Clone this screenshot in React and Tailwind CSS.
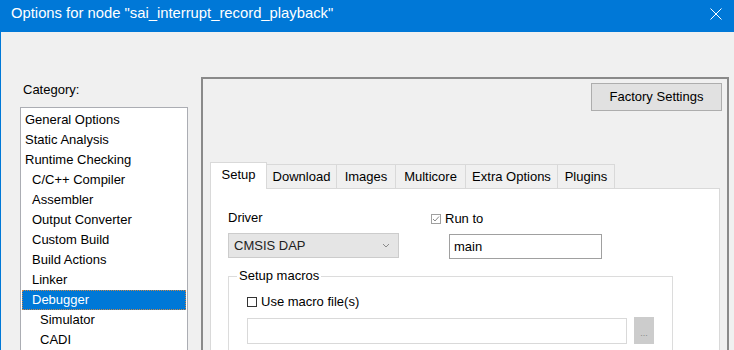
import React from "react";

const categories = [
  { label: "General Options", level: 0 },
  { label: "Static Analysis", level: 0 },
  { label: "Runtime Checking", level: 0 },
  { label: "C/C++ Compiler", level: 1 },
  { label: "Assembler", level: 1 },
  { label: "Output Converter", level: 1 },
  { label: "Custom Build", level: 1 },
  { label: "Build Actions", level: 1 },
  { label: "Linker", level: 1 },
  { label: "Debugger", level: 1, selected: true },
  { label: "Simulator", level: 2 },
  { label: "CADI", level: 2 },
];

const tabs = [
  { label: "Setup", w: "w-[57px]", selected: true },
  { label: "Download", w: "w-[70px]" },
  { label: "Images", w: "w-[59px]" },
  { label: "Multicore", w: "w-[70px]" },
  { label: "Extra Options", w: "w-[92px]" },
  { label: "Plugins", w: "w-[57px]" },
];

function CheckBox({ checked, disabled }) {
  return (
    <div
      className={
        "w-[10px] h-[10px] border bg-white flex items-center justify-center shrink-0 " +
        (disabled ? "border-[#a0a0a0]" : "border-[#333333]")
      }
    >
      {checked && (
        <svg width="8" height="8" viewBox="0 0 8 8">
          <path d="M1 4 L3 6 L7 1.5" fill="none" stroke="#8a8a8a" strokeWidth="1" />
        </svg>
      )}
    </div>
  );
}

export default function App() {
  return (
    <div className="w-[734px] h-[350px] overflow-hidden bg-[#f0f0f0] font-['Liberation_Sans',Arial,sans-serif] text-[13px] text-black flex flex-col">
      {/* Title bar */}
      <div className="h-[32px] shrink-0 bg-[#0078d7] flex items-start pl-[11px] pt-[3px] text-white">
        <span className="text-[14.8px] leading-[20px] whitespace-nowrap">
          Options for node "sai_interrupt_record_playback"
        </span>
        <div className="ml-auto mr-[12px] mt-[5px]">
          <svg width="12" height="12" viewBox="0 0 12 12">
            <path d="M0.5 0.5 L11.5 11.5 M11.5 0.5 L0.5 11.5" stroke="white" strokeWidth="1" fill="none" />
          </svg>
        </div>
      </div>

      {/* Body */}
      <div className="flex-1 min-h-0 flex border-l border-[#0078d7]">
        {/* Left column */}
        <div className="w-[168px] ml-[19px] flex flex-col shrink-0">
          <div className="mt-[49px] pl-[3px] h-[18px] leading-[18px]">Category:</div>
          <div className="mt-[8px] w-[168px] h-[300px] border border-[#abadb3] bg-white pt-[2px] px-[1px]">
            {categories.map((c) => (
              <div
                key={c.label}
                className={
                  "h-[20px] leading-[20px] whitespace-nowrap " +
                  (c.level === 0 ? "pl-[3px] " : c.level === 1 ? "pl-[10px] " : "pl-[18px] ") +
                  (c.selected
                    ? "bg-[#0078d7] text-white outline outline-1 outline-dotted outline-[#c8874a] -outline-offset-1"
                    : "")
                }
              >
                {c.label}
              </div>
            ))}
          </div>
        </div>

        {/* Right panel */}
        <div className="ml-[13px] mt-[45px] w-[528px] h-[300px] shrink-0 border-2 border-[#8a8a8a] flex flex-col">
          <div className="flex justify-end mt-[4px] mr-[5px]">
            <div className="w-[131px] h-[28px] bg-[#e1e1e1] border border-[#adadad] flex items-center justify-center">
              Factory Settings
            </div>
          </div>

          {/* Tabs */}
          <div className="mt-[51px] ml-[7px] mr-[7px] flex flex-col">
            <div className="flex items-end h-[26px]">
              {tabs.map((t) =>
                t.selected ? (
                  <div
                    key={t.label}
                    className={
                      t.w +
                      " h-[27px] -mb-px relative z-10 bg-white border border-b-0 border-[#d9d9d9] flex items-center justify-center pb-[2px]"
                    }
                  >
                    {t.label}
                  </div>
                ) : (
                  <div
                    key={t.label}
                    className={
                      t.w +
                      " h-[24px] bg-[#f0f0f0] border border-l-0 border-b-0 border-[#d9d9d9] flex items-center justify-center"
                    }
                  >
                    {t.label}
                  </div>
                )
              )}
            </div>
            <div className="h-[200px] bg-white border border-[#d9d9d9] pl-[17px]">
              <div className="flex">
                {/* Driver column */}
                <div className="w-[171px] flex flex-col">
                  <div className="mt-[19px] h-[20px] leading-[20px]">Driver</div>
                  <div className="mt-[5px] h-[25px] bg-[#e5e5e5] border border-[#cccccc] flex items-center pl-[5px] pr-[8px] text-[#222]">
                    <span>CMSIS DAP</span>
                    <svg className="ml-auto" width="8" height="5" viewBox="0 0 8 5">
                      <path d="M1 1 L4 4 L7 1" fill="none" stroke="#8a8a8a" strokeWidth="1" />
                    </svg>
                  </div>
                </div>
                {/* Run to column */}
                <div className="ml-[32px] flex flex-col">
                  <div className="mt-[20px] h-[20px] flex items-center gap-[4px]">
                    <CheckBox checked disabled />
                    <span className="leading-[20px]">Run to</span>
                  </div>
                  <div className="mt-[5px] ml-[18px] w-[153px] h-[25px] border border-[#a0a0a0] bg-white flex items-center pl-[4px]">
                    main
                  </div>
                </div>
              </div>

              {/* Setup macros group */}
              <fieldset className="mt-[8px] w-[445px] border border-[#dcdcdc] pl-[18px] pb-[10px]">
                <legend className="-ml-[10px] px-[2px] h-[18px] leading-[18px]">Setup macros</legend>
                <div className="mt-[7px] h-[20px] flex items-center gap-[4px]">
                  <CheckBox />
                  <span className="leading-[20px]">Use macro file(s)</span>
                </div>
                <div className="mt-[6px] flex items-start">
                  <div className="w-[380px] h-[26px] border border-[#d9d9d9] bg-white" />
                  <div className="ml-[7px] -mt-[1px] w-[20px] h-[27px] bg-[#cccccc] flex items-end justify-center pb-[6px] text-[9px] leading-[9px] text-[#8a8a8a]">
                    ...
                  </div>
                </div>
              </fieldset>
            </div>
          </div>
        </div>
      </div>
    </div>
  );
}
